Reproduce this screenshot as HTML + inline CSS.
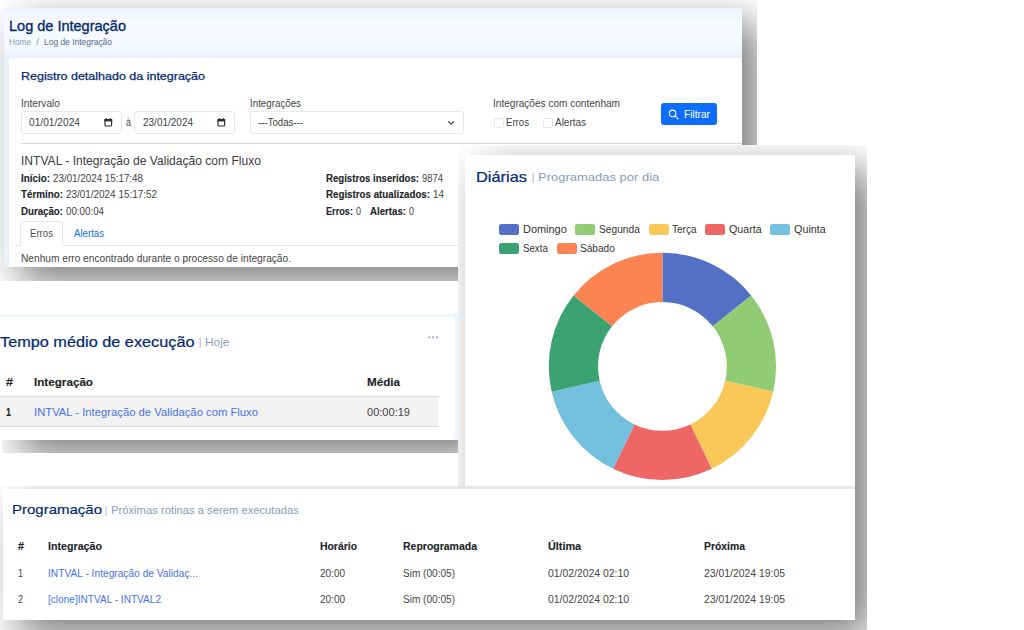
<!DOCTYPE html>
<html lang="pt-BR">
<head>
<meta charset="utf-8">
<title>Log de Integração</title>
<style>
html,body{margin:0;padding:0;}
body{width:1024px;height:630px;overflow:hidden;background:#fff;position:relative;font-family:"Liberation Sans",sans-serif;}
.img{position:absolute;overflow:hidden;background:#fff;}
.abs{position:absolute;}
.t{position:absolute;white-space:nowrap;transform-origin:0 50%;display:block;}
#img1{left:0;top:0;width:757px;height:281px;}
#p1{left:4px;top:8px;width:738px;height:259px;overflow:hidden;background:linear-gradient(180deg,#edf2fb 0,#f6f9ff 14px,#f6f9ff 36px,#eaf0fa 50px);box-shadow:16px 15px 38px 0 rgba(0,0,0,.52);}
#c1{left:9px;top:58px;width:740px;height:215px;background:#fff;border-radius:3px 0 0 0;}
.inp{position:absolute;box-sizing:border-box;border:1px solid #e4e7eb;border-radius:3px;background:#fff;}
.chk{position:absolute;box-sizing:border-box;width:9.5px;height:9.5px;border:1px solid #e3e6ea;border-radius:2px;background:#fff;}
#btn{left:661px;top:102.6px;width:56.3px;height:22.6px;background:#0d6efd;border-radius:3px;}
#img2{left:0;top:314px;width:458px;height:139px;}
#p2{left:4px;top:0;width:466px;height:126px;background:#f0f4fc;box-shadow:16px 15px 38px 0 rgba(0,0,0,.52);}
#c2{left:-10px;top:3px;width:465px;height:123px;background:#fff;border-radius:4px;}
#row2{left:0;top:82.4px;width:439px;height:28.3px;background:#f2f2f2;border-top:1px solid #dcdcdc;border-bottom:1px solid #dcdcdc;}
#img3{left:458px;top:145px;width:409px;height:485px;clip-path:polygon(0 0,409px 0,409px 485px,397px 485px,397px 341px,0 341px);}
#p3{left:7px;top:10px;width:390px;height:465px;background:#fff;box-shadow:16px 15px 38px 0 rgba(0,0,0,.52);}
.sw{position:absolute;width:20px;height:10.5px;border-radius:2.5px;}
#img4{left:0;top:486px;width:855px;height:144px;}
#p4{left:3px;top:3px;width:852px;height:131px;background:#fff;box-shadow:16px 15px 38px 0 rgba(0,0,0,.52);}
svg{position:absolute;left:0;top:0;overflow:visible;}

#in1{position:absolute;left:-4px;top:-8px;width:757px;height:281px;}

</style>
</head>
<body>
<div class="img" id="img1">
  <div class="abs" id="p1"><div id="in1">
  <div class="abs" id="c1"></div>
  <div class="inp" style="left:21px;top:111px;width:100.5px;height:22.5px"></div>
  <div class="inp" style="left:134px;top:111px;width:100.5px;height:22.5px"></div>
  <div class="inp" style="left:250px;top:111px;width:214px;height:22.5px"></div>
  <div class="chk" style="left:494px;top:118px"></div>
  <div class="chk" style="left:543px;top:118px"></div>
  <div class="abs" id="btn"></div>
  <div class="abs" style="left:21px;top:143px;width:740px;height:1px;background:#d9d9d9"></div>
  <div class="abs" style="left:14px;top:245px;width:740px;height:1px;background:#e3e6ea"></div>
  <div class="abs" style="left:20px;top:221px;width:43px;height:25px;box-sizing:border-box;border:1px solid #e3e6ea;border-bottom:1px solid #fff;border-radius:3px 3px 0 0;background:#fff"></div>
  <svg width="757" height="281" viewBox="0 0 757 281">
    <g fill="none" stroke="#2a2e33" stroke-width="1.2">
      <rect x="105" y="119.6" width="6.6" height="6.4" rx="1"/><path d="M104.4 120.2h7.8" stroke-width="2.4"/><path d="M106.3 118v1.5M110.3 118v1.5" stroke-width="1"/>
      <rect x="218" y="119.6" width="6.6" height="6.4" rx="1"/><path d="M217.4 120.2h7.8" stroke-width="2.4"/><path d="M219.3 118v1.5M223.3 118v1.5" stroke-width="1"/>
      <path d="M448.3 121.3l2.8 2.8 2.8-2.8" stroke="#343a40" stroke-width="1.15"/>
    </g>
    <g fill="none" stroke="#fff" stroke-width="1.05"><circle cx="672.6" cy="113.4" r="3.3"/><path d="M675.1 115.9l2.9 2.9" stroke-linecap="round"/></g>
  </svg>
<span class="t" id="t0" style="left:9px;top:15.70px;font-size:14.5px;line-height:20.3px;color:#012970;-webkit-text-stroke:0.32px #012970;transform:scaleX(1.0008);">Log de Integração</span>
<span class="t" id="t1" style="left:9px;top:37.14px;font-size:8.4px;line-height:11.8px;color:#899bbd;transform:scaleX(0.9846);">Home</span>
<span class="t" id="t2" style="left:36px;top:37.14px;font-size:8.4px;line-height:11.8px;color:#899bbd;transform:scaleX(1.2886);">/</span>
<span class="t" id="t3" style="left:44px;top:37.14px;font-size:8.4px;line-height:11.8px;color:#51678f;transform:scaleX(1.0069);">Log de Integração</span>
<span class="t" id="t4" style="left:21px;top:69.27px;font-size:11.2px;line-height:15.7px;color:#012970;-webkit-text-stroke:0.25px #012970;transform:scaleX(1.1163);">Registro detalhado da integração</span>
<span class="t" id="t5" style="left:21px;top:96.83px;font-size:10.3px;line-height:14.4px;color:#444444;transform:scaleX(0.9873);">Intervalo</span>
<span class="t" id="t6" style="left:29px;top:116.33px;font-size:10.3px;line-height:14.4px;color:#3a3f45;transform:scaleX(0.9894);">01/01/2024</span>
<span class="t" id="t7" style="left:126px;top:116.33px;font-size:10.3px;line-height:14.4px;color:#444444;transform:scaleX(0.8719);">à</span>
<span class="t" id="t8" style="left:143px;top:116.33px;font-size:10.3px;line-height:14.4px;color:#3a3f45;transform:scaleX(0.9700);">23/01/2024</span>
<span class="t" id="t9" style="left:250px;top:96.83px;font-size:10.3px;line-height:14.4px;color:#444444;transform:scaleX(0.9477);">Integrações</span>
<span class="t" id="t10" style="left:258px;top:116.33px;font-size:10.3px;line-height:14.4px;color:#3a3f45;transform:scaleX(0.9363);">---Todas---</span>
<span class="t" id="t11" style="left:493px;top:96.83px;font-size:10.3px;line-height:14.4px;color:#444444;transform:scaleX(0.9774);">Integrações com contenham</span>
<span class="t" id="t12" style="left:506px;top:116.33px;font-size:10.3px;line-height:14.4px;color:#444444;transform:scaleX(0.9346);">Erros</span>
<span class="t" id="t13" style="left:555px;top:116.33px;font-size:10.3px;line-height:14.4px;color:#444444;transform:scaleX(0.9669);">Alertas</span>
<span class="t" id="t14" style="left:684px;top:108.13px;font-size:10.3px;line-height:14.4px;color:#ffffff;transform:scaleX(0.9881);">Filtrar</span>
<span class="t" id="t15" style="left:21px;top:152.67px;font-size:12.2px;line-height:17.1px;color:#3c3c3c;transform:scaleX(0.9905);">INTVAL - Integração de Validação com Fluxo</span>
<span class="t" id="t16" style="left:21px;top:171.83px;font-size:10.3px;line-height:14.4px;color:#212529;font-weight:700;-webkit-text-stroke:0.12px #212529;transform:scaleX(0.9562);">Início:</span>
<span class="t" id="t17" style="left:53px;top:171.83px;font-size:10.3px;line-height:14.4px;color:#444444;transform:scaleX(0.9525);">23/01/2024 15:17:48</span>
<span class="t" id="t18" style="left:21px;top:188.33px;font-size:10.3px;line-height:14.4px;color:#212529;font-weight:700;-webkit-text-stroke:0.12px #212529;transform:scaleX(0.9532);">Término:</span>
<span class="t" id="t19" style="left:66px;top:188.33px;font-size:10.3px;line-height:14.4px;color:#444444;transform:scaleX(0.9631);">23/01/2024 15:17:52</span>
<span class="t" id="t20" style="left:21px;top:204.83px;font-size:10.3px;line-height:14.4px;color:#212529;font-weight:700;-webkit-text-stroke:0.12px #212529;transform:scaleX(0.9408);">Duração:</span>
<span class="t" id="t21" style="left:66px;top:204.83px;font-size:10.3px;line-height:14.4px;color:#444444;transform:scaleX(0.9478);">00:00:04</span>
<span class="t" id="t22" style="left:326px;top:171.83px;font-size:10.3px;line-height:14.4px;color:#212529;font-weight:700;-webkit-text-stroke:0.12px #212529;transform:scaleX(0.9341);">Registros inseridos:</span>
<span class="t" id="t23" style="left:422px;top:171.83px;font-size:10.3px;line-height:14.4px;color:#444444;transform:scaleX(0.9162);">9874</span>
<span class="t" id="t24" style="left:326px;top:188.33px;font-size:10.3px;line-height:14.4px;color:#212529;font-weight:700;-webkit-text-stroke:0.12px #212529;transform:scaleX(0.9467);">Registros atualizados:</span>
<span class="t" id="t25" style="left:433px;top:188.33px;font-size:10.3px;line-height:14.4px;color:#444444;transform:scaleX(0.9591);">14</span>
<span class="t" id="t26" style="left:326px;top:204.83px;font-size:10.3px;line-height:14.4px;color:#212529;font-weight:700;-webkit-text-stroke:0.12px #212529;transform:scaleX(0.8903);">Erros:</span>
<span class="t" id="t27" style="left:356px;top:204.83px;font-size:10.3px;line-height:14.4px;color:#444444;transform:scaleX(0.8719);">0</span>
<span class="t" id="t28" style="left:370px;top:204.83px;font-size:10.3px;line-height:14.4px;color:#212529;font-weight:700;-webkit-text-stroke:0.12px #212529;transform:scaleX(0.9389);">Alertas:</span>
<span class="t" id="t29" style="left:409px;top:204.83px;font-size:10.3px;line-height:14.4px;color:#444444;transform:scaleX(0.8719);">0</span>
<span class="t" id="t30" style="left:30px;top:227.33px;font-size:10.3px;line-height:14.4px;color:#495057;transform:scaleX(0.9346);">Erros</span>
<span class="t" id="t31" style="left:74px;top:227.33px;font-size:10.3px;line-height:14.4px;color:#0d6efd;transform:scaleX(0.9357);">Alertas</span>
<span class="t" id="t32" style="left:21px;top:251.83px;font-size:10.3px;line-height:14.4px;color:#444444;transform:scaleX(0.9868);">Nenhum erro encontrado durante o processo de integração.</span>
</div></div></div>
<div class="img" id="img2">
  <div class="abs" id="p2"></div>
  <div class="abs" style="left:0;top:0;width:6px;height:4px;background:#f0f4fc"></div>
  <div class="abs" id="c2"></div>
  <div class="abs" id="row2"></div>
  <div class="abs" style="left:0;top:126px;width:2px;height:13px;background:#fff"></div>
  <svg width="458" height="139"><g fill="#9fadc9"><circle cx="429.3" cy="23.3" r="1.1"/><circle cx="433.1" cy="23.3" r="1.1"/><circle cx="436.9" cy="23.3" r="1.1"/></g></svg>
</div>
<span class="t" id="t33" style="left:-0.5px;top:331.80px;font-size:14.5px;line-height:20.3px;color:#012970;-webkit-text-stroke:0.22px #012970;transform:scaleX(1.1223);">Tempo médio de execução</span>
<span class="t" id="t34" style="left:198.8px;top:335.27px;font-size:11.2px;line-height:15.7px;color:#899bbd;transform:scaleX(0.7570);">|</span>
<span class="t" id="t35" style="left:204.6px;top:335.27px;font-size:11.2px;line-height:15.7px;color:#899bbd;transform:scaleX(1.0601);">Hoje</span>
<span class="t" id="t36" style="left:6px;top:374.94px;font-size:10.9px;line-height:15.3px;color:#212529;font-weight:700;-webkit-text-stroke:0.13px #212529;transform:scaleX(1.1546);">#</span>
<span class="t" id="t37" style="left:34px;top:374.94px;font-size:10.9px;line-height:15.3px;color:#212529;font-weight:700;-webkit-text-stroke:0.13px #212529;transform:scaleX(1.0712);">Integração</span>
<span class="t" id="t38" style="left:367px;top:374.94px;font-size:10.9px;line-height:15.3px;color:#212529;font-weight:700;-webkit-text-stroke:0.13px #212529;transform:scaleX(1.0688);">Média</span>
<span class="t" id="t39" style="left:6px;top:404.94px;font-size:10.9px;line-height:15.3px;color:#212529;font-weight:700;-webkit-text-stroke:0.13px #212529;transform:scaleX(0.8247);">1</span>
<span class="t" id="t40" style="left:34px;top:404.94px;font-size:10.9px;line-height:15.3px;color:#4674ea;transform:scaleX(1.0346);">INTVAL - Integração de Validação com Fluxo</span>
<span class="t" id="t41" style="left:367px;top:404.94px;font-size:10.9px;line-height:15.3px;color:#444444;transform:scaleX(1.0140);">00:00:19</span>
<div class="img" id="img3">
  <div class="abs" id="p3"></div>
</div>
<svg width="1024" height="630" viewBox="0 0 1024 630">
<path fill="#5470c6" d="M662.40 252.80A113.6 113.6 0 0 1 751.22 295.57L712.75 326.25A64.4 64.4 0 0 0 662.40 302.00Z"/>
<path fill="#91cc75" d="M751.22 295.57A113.6 113.6 0 0 1 773.15 391.68L725.19 380.73A64.4 64.4 0 0 0 712.75 326.25Z"/>
<path fill="#fac858" d="M773.15 391.68A113.6 113.6 0 0 1 711.69 468.75L690.34 424.42A64.4 64.4 0 0 0 725.19 380.73Z"/>
<path fill="#ee6666" d="M711.69 468.75A113.6 113.6 0 0 1 613.11 468.75L634.46 424.42A64.4 64.4 0 0 0 690.34 424.42Z"/>
<path fill="#73c0de" d="M613.11 468.75A113.6 113.6 0 0 1 551.65 391.68L599.61 380.73A64.4 64.4 0 0 0 634.46 424.42Z"/>
<path fill="#3ba272" d="M551.65 391.68A113.6 113.6 0 0 1 573.58 295.57L612.05 326.25A64.4 64.4 0 0 0 599.61 380.73Z"/>
<path fill="#fc8452" d="M573.58 295.57A113.6 113.6 0 0 1 662.40 252.80L662.40 302.00A64.4 64.4 0 0 0 612.05 326.25Z"/>
</svg>
<div class="sw" style="left:499px;top:224px;background:#5470c6"></div>
<div class="sw" style="left:575px;top:224px;background:#91cc75"></div>
<div class="sw" style="left:649px;top:224px;background:#fac858"></div>
<div class="sw" style="left:705px;top:224px;background:#ee6666"></div>
<div class="sw" style="left:770px;top:224px;background:#73c0de"></div>
<div class="sw" style="left:499px;top:243px;background:#3ba272"></div>
<div class="sw" style="left:557px;top:243px;background:#fc8452"></div>
<span class="t" id="t42" style="left:476px;top:167.30px;font-size:14.5px;line-height:20.3px;color:#012970;-webkit-text-stroke:0.22px #012970;transform:scaleX(1.1302);">Diárias</span>
<span class="t" id="t43" style="left:531.9px;top:170.27px;font-size:11.2px;line-height:15.7px;color:#899bbd;transform:scaleX(0.7570);">|</span>
<span class="t" id="t44" style="left:538.2px;top:170.27px;font-size:11.2px;line-height:15.7px;color:#899bbd;transform:scaleX(1.1609);">Programadas por dia</span>
<span class="t" id="t45" style="left:523.2px;top:222.83px;font-size:10.3px;line-height:14.4px;color:#333333;transform:scaleX(1.0626);">Domingo</span>
<span class="t" id="t46" style="left:599.2px;top:222.83px;font-size:10.3px;line-height:14.4px;color:#333333;transform:scaleX(0.9895);">Segunda</span>
<span class="t" id="t47" style="left:672.4px;top:222.83px;font-size:10.3px;line-height:14.4px;color:#333333;transform:scaleX(0.9767);">Terça</span>
<span class="t" id="t48" style="left:729.2px;top:222.83px;font-size:10.3px;line-height:14.4px;color:#333333;transform:scaleX(1.0418);">Quarta</span>
<span class="t" id="t49" style="left:794.2px;top:222.83px;font-size:10.3px;line-height:14.4px;color:#333333;transform:scaleX(1.0480);">Quinta</span>
<span class="t" id="t50" style="left:523.2px;top:241.83px;font-size:10.3px;line-height:14.4px;color:#333333;transform:scaleX(0.9414);">Sexta</span>
<span class="t" id="t51" style="left:580.2px;top:241.83px;font-size:10.3px;line-height:14.4px;color:#333333;transform:scaleX(0.9799);">Sábado</span>
<div class="img" id="img4">
  <div class="abs" id="p4"></div>
</div>
<span class="t" id="t52" style="left:12px;top:500.90px;font-size:13.5px;line-height:18.9px;color:#012970;-webkit-text-stroke:0.20px #012970;transform:scaleX(1.1105);">Programação</span>
<span class="t" id="t53" style="left:105px;top:503.83px;font-size:10.3px;line-height:14.4px;color:#899bbd;transform:scaleX(0.7442);">|</span>
<span class="t" id="t54" style="left:110.5px;top:503.83px;font-size:10.3px;line-height:14.4px;color:#899bbd;transform:scaleX(1.0902);">Próximas rotinas a serem executadas</span>
<span class="t" id="t55" style="left:18px;top:540.00px;font-size:10px;line-height:14.0px;color:#212529;font-weight:700;-webkit-text-stroke:0.12px #212529;transform:scaleX(1.0787);">#</span>
<span class="t" id="t56" style="left:48px;top:540.00px;font-size:10px;line-height:14.0px;color:#212529;font-weight:700;-webkit-text-stroke:0.12px #212529;transform:scaleX(1.0677);">Integração</span>
<span class="t" id="t57" style="left:320px;top:540.00px;font-size:10px;line-height:14.0px;color:#212529;font-weight:700;-webkit-text-stroke:0.12px #212529;transform:scaleX(1.0404);">Horário</span>
<span class="t" id="t58" style="left:403px;top:540.00px;font-size:10px;line-height:14.0px;color:#212529;font-weight:700;-webkit-text-stroke:0.12px #212529;transform:scaleX(1.0485);">Reprogramada</span>
<span class="t" id="t59" style="left:548px;top:540.00px;font-size:10px;line-height:14.0px;color:#212529;font-weight:700;-webkit-text-stroke:0.12px #212529;transform:scaleX(1.0798);">Última</span>
<span class="t" id="t60" style="left:704px;top:540.00px;font-size:10px;line-height:14.0px;color:#212529;font-weight:700;-webkit-text-stroke:0.12px #212529;transform:scaleX(1.0388);">Próxima</span>
<span class="t" id="t61" style="left:18px;top:567.00px;font-size:10px;line-height:14.0px;color:#444444;transform:scaleX(0.8989);">1</span>
<span class="t" id="t62" style="left:48px;top:567.00px;font-size:10px;line-height:14.0px;color:#4674ea;transform:scaleX(1.0196);">INTVAL - Integração de Validaç...</span>
<span class="t" id="t63" style="left:320px;top:567.00px;font-size:10px;line-height:14.0px;color:#444444;transform:scaleX(0.9988);">20:00</span>
<span class="t" id="t64" style="left:403px;top:567.00px;font-size:10px;line-height:14.0px;color:#444444;transform:scaleX(1.0060);">Sim (00:05)</span>
<span class="t" id="t65" style="left:548px;top:567.00px;font-size:10px;line-height:14.0px;color:#444444;transform:scaleX(1.0403);">01/02/2024 02:10</span>
<span class="t" id="t66" style="left:704px;top:567.00px;font-size:10px;line-height:14.0px;color:#444444;transform:scaleX(1.0403);">23/01/2024 19:05</span>
<span class="t" id="t67" style="left:18px;top:593.00px;font-size:10px;line-height:14.0px;color:#444444;transform:scaleX(0.8989);">2</span>
<span class="t" id="t68" style="left:48px;top:593.00px;font-size:10px;line-height:14.0px;color:#4674ea;transform:scaleX(1.0082);">[clone]INTVAL - INTVAL2</span>
<span class="t" id="t69" style="left:320px;top:593.00px;font-size:10px;line-height:14.0px;color:#444444;transform:scaleX(0.9988);">20:00</span>
<span class="t" id="t70" style="left:403px;top:593.00px;font-size:10px;line-height:14.0px;color:#444444;transform:scaleX(1.0060);">Sim (00:05)</span>
<span class="t" id="t71" style="left:548px;top:593.00px;font-size:10px;line-height:14.0px;color:#444444;transform:scaleX(1.0403);">01/02/2024 02:10</span>
<span class="t" id="t72" style="left:704px;top:593.00px;font-size:10px;line-height:14.0px;color:#444444;transform:scaleX(1.0403);">23/01/2024 19:05</span>

</body>
</html>
